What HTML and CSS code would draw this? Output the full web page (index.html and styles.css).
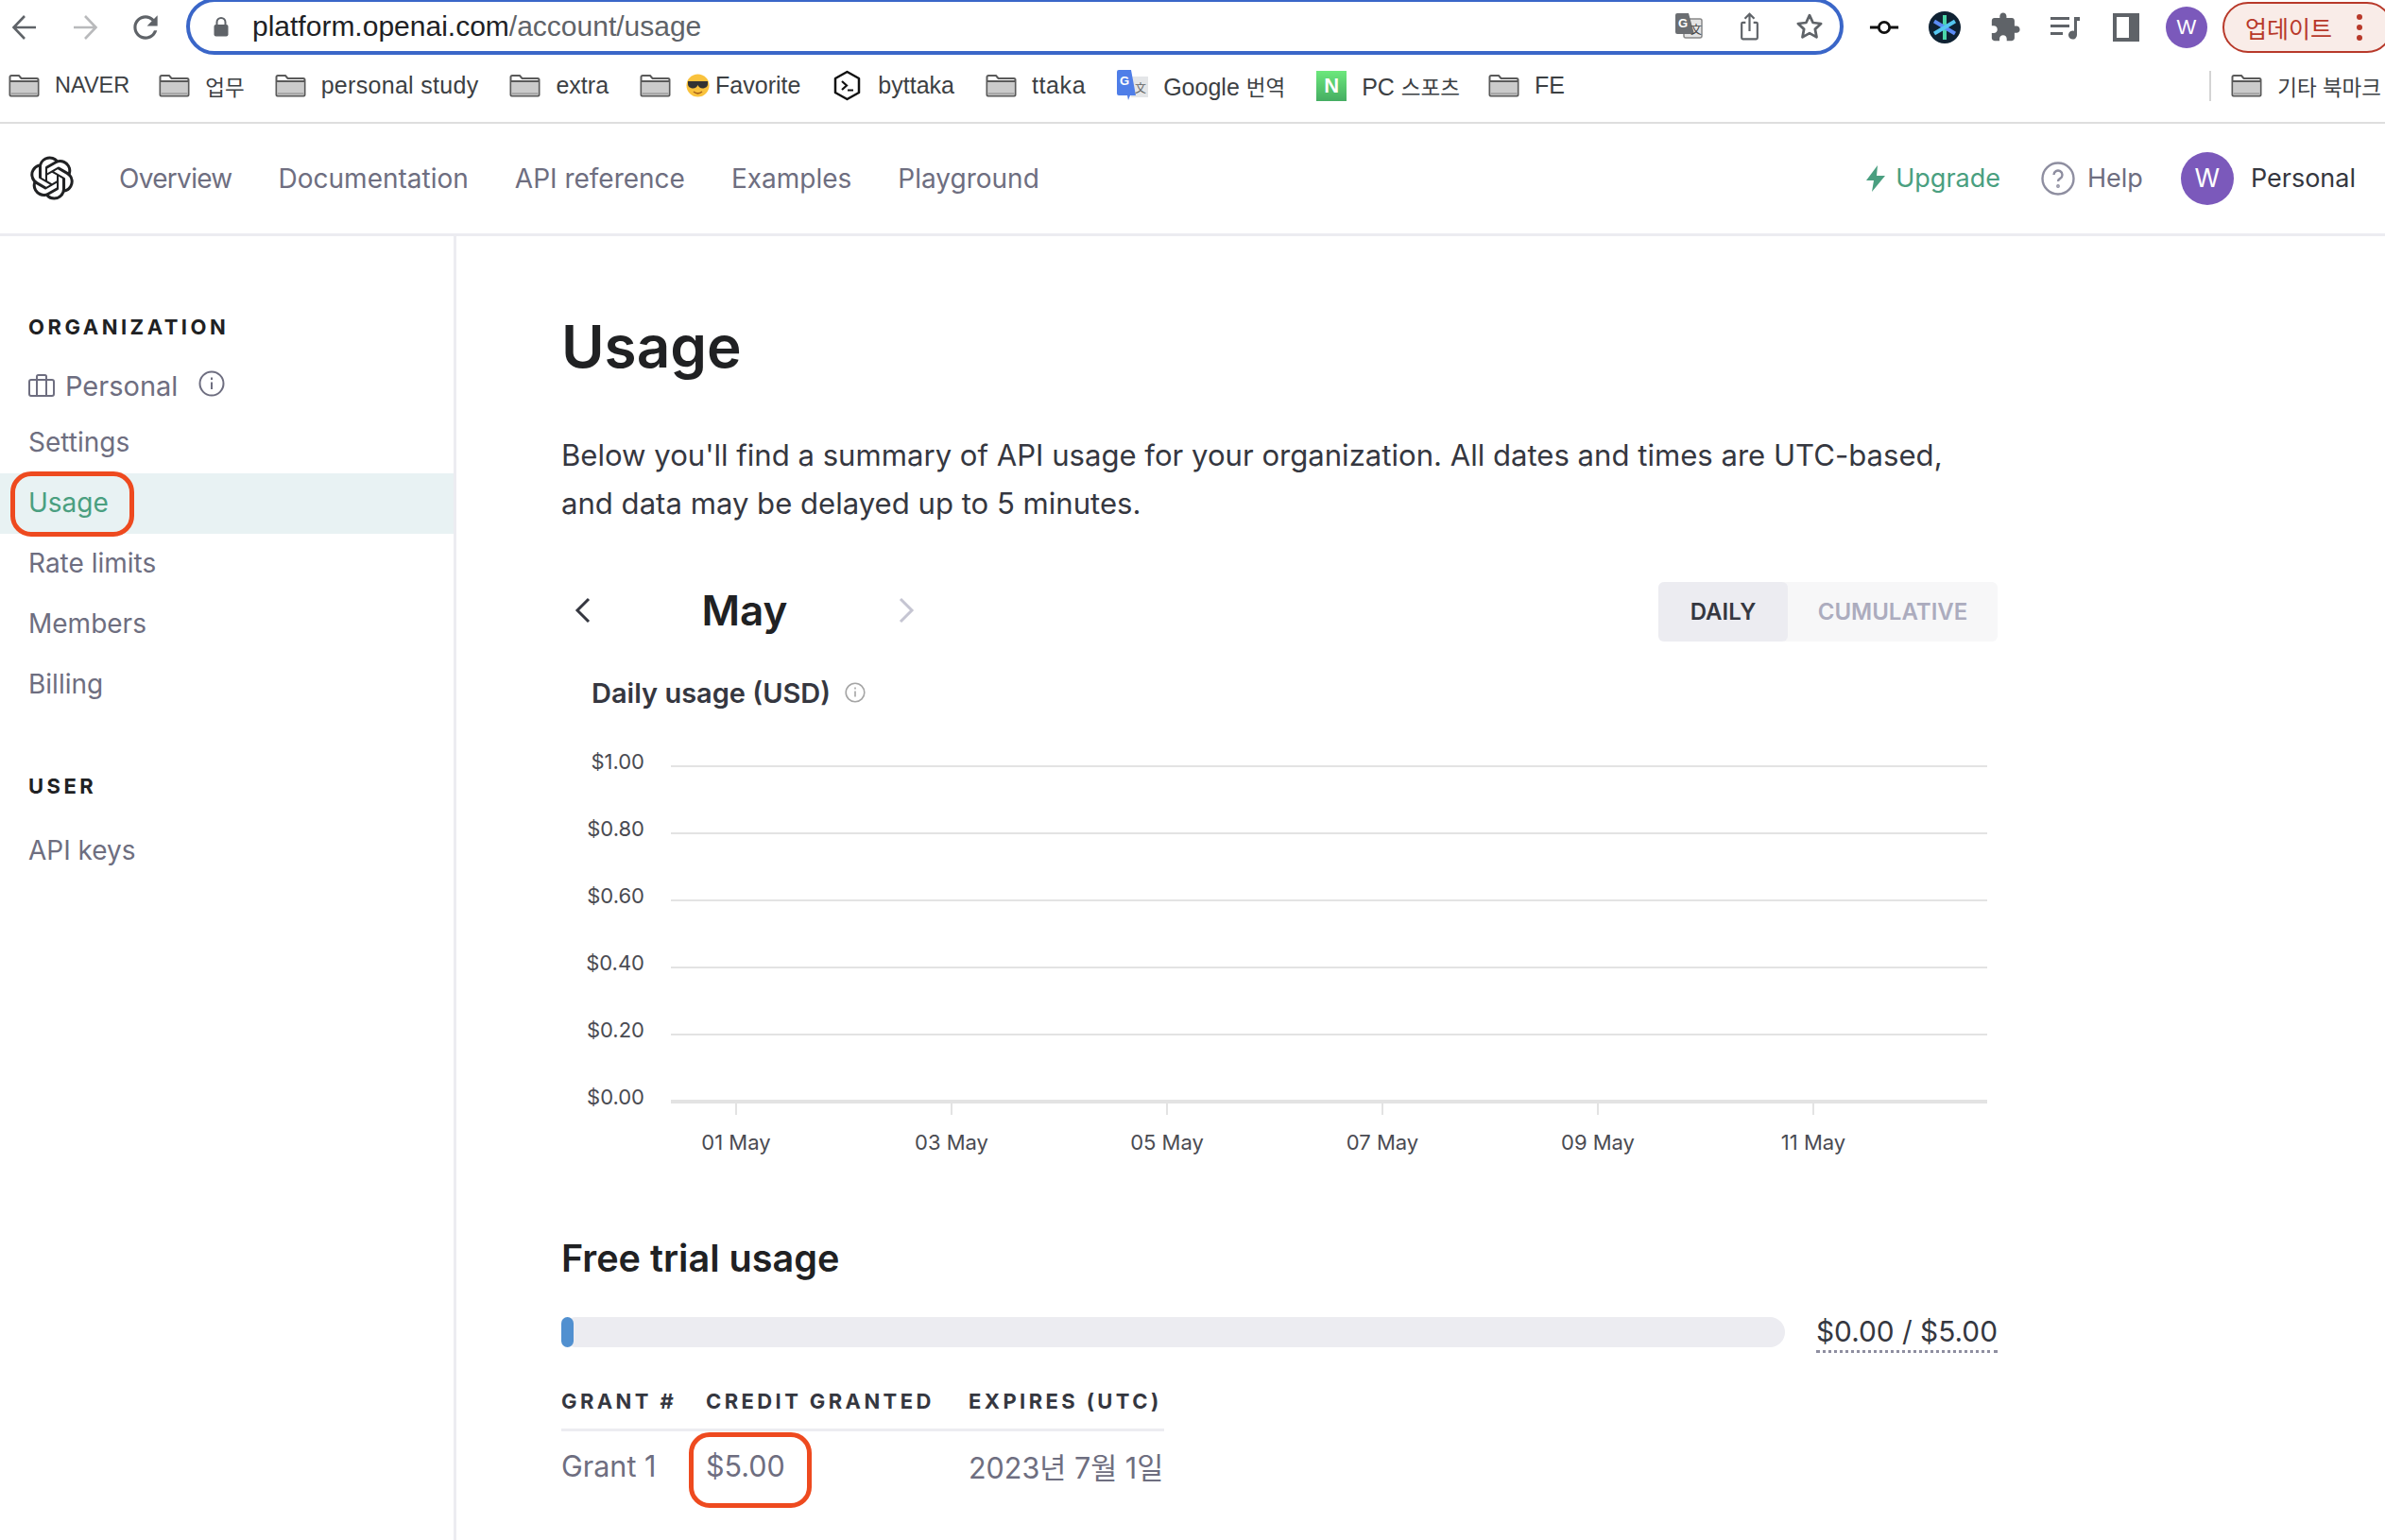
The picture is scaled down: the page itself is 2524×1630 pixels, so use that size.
FILE: index.html
```html
<!DOCTYPE html>
<html lang="ko">
  <head>
    <meta charset="UTF-8" />
    <meta name="viewport" content="width=device-width, initial-scale=1.0" />
    <title>Usage - OpenAI API</title>
    <link rel="stylesheet" href="styles.css">
  </head>
  <body>
    <svg class="defs" width="0" height="0">
      <symbol id="folder" viewBox="0 0 33 24">
        <path d="M1.5 4.5V3a1.5 1.5 0 0 1 1.5-1.5h8l2.5 3H30A1.5 1.5 0 0 1 31.5 6v16a1 1 0 0 1-1 1h-28a1 1 0 0 1-1-1z" fill="#fff" stroke="#5a5a5a" stroke-width="2"/>
        <rect x="2.5" y="8.5" width="28" height="13.5" fill="#cbcbcb"/>
        <path d="M1.5 7.5h30" stroke="#5a5a5a" stroke-width="2"/>
        <path d="M2.5 20.5h28" stroke="#a8a8a8" stroke-width="2"/>
      </symbol>
    </svg>

    <div class="toolbar">
      <div class="slot"><svg width="28" height="28" viewBox="0 0 28 28" fill="none" stroke="#5f6368" stroke-width="2.6"><path d="M26 14H3M14 2 2.5 14 14 26"/></svg></div>
      <div class="slot"><svg width="28" height="28" viewBox="0 0 28 28" fill="none" stroke="#b9babc" stroke-width="2.6"><path d="M2 14h23M14 2l11.5 12L14 26"/></svg></div>
      <div class="slot"><svg width="38" height="38" viewBox="0 0 24 24" fill="#5f6368"><path d="M17.65 6.35C16.2 4.9 14.21 4 12 4c-4.42 0-7.99 3.58-7.99 8s3.57 8 7.99 8c3.73 0 6.84-2.55 7.73-6h-2.08c-.82 2.33-3.04 4-5.65 4-3.31 0-6-2.69-6-6s2.69-6 6-6c1.66 0 3.14.69 4.22 1.78L13 11h7V4l-2.35 2.35z"/></svg></div>
      <div class="url-bar">
        <svg class="lock" width="16" height="21" viewBox="0 0 16 21"><path d="M3.5 8V5.5a4.5 4.5 0 0 1 9 0V8" fill="none" stroke="#5f6368" stroke-width="2"/><rect x="0.5" y="8" width="15" height="12.5" rx="2" fill="#5f6368"/></svg>
        <div class="url-text">platform.openai.com<span>/account/usage</span></div>
        <div class="slot">
          <svg width="30" height="30" viewBox="0 0 30 30"><rect x="10" y="7" width="19" height="20" rx="2" fill="#e4e4e4" stroke="#888" stroke-width="1.5"/><path d="M1 3a2 2 0 0 1 2-2h12l6 22H3a2 2 0 0 1-2-2z" fill="#6b6e72"/><text x="4" y="16" class="mini-g" fill="#fff">G</text><text x="17" y="23" class="mini-wen" fill="#444">文</text></svg>
        </div>
        <div class="slot">
          <svg width="21" height="30" viewBox="0 0 24 36" fill="none" stroke="#5f6368" stroke-width="2.6"><path d="M7 13H3.5A1.5 1.5 0 0 0 2 14.5v18A1.5 1.5 0 0 0 3.5 34h17a1.5 1.5 0 0 0 1.5-1.5v-18a1.5 1.5 0 0 0-1.5-1.5H17M12 24V2M6 8l6-6 6 6"/></svg>
        </div>
        <div class="slot">
          <svg width="30" height="30" viewBox="0 0 24 24" fill="none" stroke="#5f6368" stroke-width="2.2" stroke-linejoin="round"><path d="m12 2.5 2.9 6.3 6.8.8-5 4.7 1.3 6.8-6-3.4-6 3.4 1.3-6.8-5-4.7 6.8-.8z"/></svg>
        </div>
      </div>
      <div class="slot">
        <svg width="32" height="20" viewBox="0 0 34 20" fill="none" stroke="#111" stroke-width="3"><path d="M1 10h10M23 10h10"/><circle cx="17" cy="10" r="6"/></svg>
      </div>
      <div class="slot">
        <svg width="34" height="34" viewBox="0 0 34 34"><circle cx="17" cy="17" r="17" fill="#0f2233"/><g stroke-width="4"><path d="M17 4v26" stroke="#4bd6a8"/><path d="M6 10.5l22 13" stroke="#5b8cf5"/><path d="M28 10.5l-22 13" stroke="#54c6f0"/></g></svg>
      </div>
      <div class="slot">
        <svg width="34" height="34" viewBox="0 0 24 24" fill="#5f6368"><path d="M20.5 11H19V7c0-1.1-.9-2-2-2h-4V3.5C13 2.12 11.88 1 10.5 1S8 2.12 8 3.5V5H4c-1.1 0-1.99.9-1.99 2v3.8H3.5c1.49 0 2.7 1.21 2.7 2.7s-1.21 2.7-2.7 2.7H2V20c0 1.1.9 2 2 2h3.8v-1.5c0-1.49 1.21-2.7 2.7-2.7 1.49 0 2.7 1.21 2.7 2.7V22H17c1.1 0 2-.9 2-2v-4h1.5c1.38 0 2.5-1.12 2.5-2.5S21.88 11 20.5 11z"/></svg>
      </div>
      <div class="slot">
        <svg width="32" height="26" viewBox="0 0 32 26" fill="#5f6368"><rect x="0" y="2" width="20" height="3"/><rect x="0" y="10" width="20" height="3"/><rect x="0" y="18" width="13" height="3"/><path d="M25 2h6v4h-3v15a4.5 4.5 0 1 1-3-4.2z"/></svg>
      </div>
      <div class="slot">
        <svg width="28" height="30" viewBox="0 0 28 30"><rect width="28" height="30" fill="#5f6368"/><rect x="4" y="4" width="13" height="22" fill="#fff"/></svg>
      </div>
      <div class="slot"><div class="chrome-avatar">W</div></div>
      <div class="update-btn">
        <span>업데이트</span>
        <i class="kebab"></i>
      </div>
    </div>

    <div class="bookmarks">
      <div class="bm bm-naver"><svg class="bm-icon"><use href="#folder"/></svg>NAVER</div>
      <div class="bm bm-work"><svg class="bm-icon"><use href="#folder"/></svg><span class="ko">업무</span></div>
      <div class="bm bm-study"><svg class="bm-icon"><use href="#folder"/></svg>personal study</div>
      <div class="bm"><svg class="bm-icon"><use href="#folder"/></svg>extra</div>
      <div class="bm">
        <svg class="bm-icon"><use href="#folder"/></svg>
        <span class="bm-emoji">
          <svg width="25" height="25" viewBox="0 0 25 25"><circle cx="12.5" cy="12.5" r="12" fill="#f9c23c"/><path d="M2 8h21v3c0 3-3 4.5-5.5 4.5-2.5 0-4-1.5-5-3.5-1 2-2.5 3.5-5 3.5C5 15.5 2 14 2 11z" fill="#333"/><path d="M8 19c3 2.5 6 2.5 9 0" fill="none" stroke="#a5601c" stroke-width="1.5"/></svg>
          Favorite
        </span>
      </div>
      <div class="bm">
        <svg class="bm-icon" viewBox="0 0 33 33"><path d="M16.5 2 29 9v15l-12.5 7L4 24V9z" fill="#fff" stroke="#111" stroke-width="2.5" stroke-linejoin="round"/><path d="m11 12 5 4.5-5 4.5M17 21.5h6" fill="none" stroke="#111" stroke-width="2.2"/></svg>
        byttaka
      </div>
      <div class="bm bm-ttaka"><svg class="bm-icon"><use href="#folder"/></svg>ttaka</div>
      <div class="bm">
        <svg class="bm-icon" viewBox="0 0 33 33"><rect x="15" y="7" width="18" height="22" fill="#e4e6e8"/><path d="M2 0h13l5 27H14l-2 5-1-5H2a2 2 0 0 1-2-2V2a2 2 0 0 1 2-2z" fill="#4f7ee8"/><text x="3" y="16" class="mini-g" fill="#fff">G</text><text x="19" y="24" class="mini-wen" fill="#666">文</text></svg>
        <span>Google <span class="ko">번역</span></span>
      </div>
      <div class="bm bm-pc"><div class="naver-n">N</div><span>PC <span class="ko">스포츠</span></span></div>
      <div class="bm"><svg class="bm-icon"><use href="#folder"/></svg>FE</div>
      <div class="bm bm-other"><svg class="bm-icon"><use href="#folder"/></svg><span class="ko">기타 북마크</span></div>
    </div>

    <header class="topnav">
      <svg class="logo" width="46" height="47" viewBox="0 0 24 24" fill="#202123"><path d="M22.2819 9.8211a5.9847 5.9847 0 0 0-.5157-4.9108 6.0462 6.0462 0 0 0-6.5098-2.9A6.0651 6.0651 0 0 0 4.9807 4.1818a5.9847 5.9847 0 0 0-3.9977 2.9 6.0462 6.0462 0 0 0 .7427 7.0966 5.98 5.98 0 0 0 .511 4.9107 6.051 6.051 0 0 0 6.5146 2.9001A5.9847 5.9847 0 0 0 13.2599 24a6.0557 6.0557 0 0 0 5.7718-4.2058 5.9894 5.9894 0 0 0 3.9977-2.9001 6.0557 6.0557 0 0 0-.7475-7.0729zm-9.022 12.6081a4.4755 4.4755 0 0 1-2.8764-1.0408l.1419-.0804 4.7783-2.7582a.7948.7948 0 0 0 .3927-.6813v-6.7369l2.02 1.1686a.071.071 0 0 1 .038.052v5.5826a4.504 4.504 0 0 1-4.4945 4.4944zm-9.6607-4.1254a4.4708 4.4708 0 0 1-.5346-3.0137l.142.0852 4.783 2.7582a.7712.7712 0 0 0 .7806 0l5.8428-3.3685v2.3324a.0804.0804 0 0 1-.0332.0615L9.74 19.9502a4.4992 4.4992 0 0 1-6.1408-1.6464zM2.3408 7.8956a4.485 4.485 0 0 1 2.3655-1.9728V11.6a.7664.7664 0 0 0 .3879.6765l5.8144 3.3543-2.0201 1.1685a.0757.0757 0 0 1-.071 0l-4.8303-2.7865A4.504 4.504 0 0 1 2.3408 7.872zm16.5963 3.8558L13.1038 8.364 15.1192 7.2a.0757.0757 0 0 1 .071 0l4.8303 2.7913a4.4944 4.4944 0 0 1-.6765 8.1042v-5.6772a.79.79 0 0 0-.407-.667zm2.0107-3.0231l-.142-.0852-4.7735-2.7818a.7759.7759 0 0 0-.7854 0L9.409 9.2297V6.8974a.0662.0662 0 0 1 .0284-.0615l4.8303-2.7866a4.4992 4.4992 0 0 1 6.6802 4.66zM8.3065 12.863l-2.02-1.1638a.0804.0804 0 0 1-.038-.0567V6.0742a4.4992 4.4992 0 0 1 7.3757-3.4537l-.142.0805L8.704 5.459a.7948.7948 0 0 0-.3927.6813zm1.0976-2.3654l2.602-1.4998 2.6069 1.4998v2.9994l-2.5974 1.4997-2.6067-1.4997Z"/></svg>
      <nav class="nav-links">
        <a class="nav-overview">Overview</a>
        <a>Documentation</a>
        <a>API reference</a>
        <a>Examples</a>
        <a>Playground</a>
      </nav>
      <div class="nav-right">
        <a class="upgrade">
          <svg width="20" height="28" viewBox="0 0 20 28" fill="#4a9f80"><path d="M12 0 0 16h8l-2 12 14-17h-9z"/></svg>
          Upgrade
        </a>
        <a class="help">
          <svg width="36" height="36" viewBox="0 0 36 36" fill="none" stroke="#8e8ea0" stroke-width="2.4"><circle cx="18" cy="18" r="16.5"/><path d="M13.5 14a4.5 4.5 0 1 1 6.8 3.9c-1.4.8-2.3 1.6-2.3 3.1"/><circle cx="18" cy="26" r="0.7"/></svg>
          Help
        </a>
        <a class="account">
          <div class="account-avatar">W</div>
          Personal
        </a>
      </div>
    </header>

    <div class="layout">
      <aside class="sidebar">
        <h5 class="side-title">ORGANIZATION</h5>
        <div class="side-org">
          <svg width="28" height="24" viewBox="0 0 28 24" fill="none" stroke="#6e6e80" stroke-width="2"><rect x="1" y="6" width="26" height="17" rx="2"/><path d="M9 23V2.5A1.5 1.5 0 0 1 10.5 1h7A1.5 1.5 0 0 1 19 2.5V23"/></svg>
          <span>Personal</span>
          <svg class="org-info" width="28" height="28" viewBox="0 0 28 28" fill="none" stroke="#6e6e80" stroke-width="2"><circle cx="14" cy="14" r="12.5"/><path d="M14 12.5v7.5M14 7.5v2.5"/></svg>
        </div>
        <a class="side-link side-settings">Settings</a>
        <a class="side-link active">Usage<span class="ring ring-usage"></span></a>
        <a class="side-link">Rate limits</a>
        <a class="side-link">Members</a>
        <a class="side-link">Billing</a>
        <h5 class="side-title side-user">USER</h5>
        <a class="side-link">API keys</a>
      </aside>

      <main class="content">
        <h1 class="page-title">Usage</h1>
        <p class="intro">Below you'll find a summary of API usage for your organization. All dates and times are UTC-based, and data may be delayed up to 5 minutes.</p>

        <div class="month-row">
          <svg class="chev" width="18" height="28" viewBox="0 0 18 28" fill="none" stroke="#353740" stroke-width="3"><path d="M15 2 3 14l12 12"/></svg>
          <h2 class="month">May</h2>
          <svg width="18" height="28" viewBox="0 0 18 28" fill="none" stroke="#c5c5d2" stroke-width="3"><path d="m3 2 12 12L3 26"/></svg>
          <div class="toggle">
            <div class="toggle-on">DAILY</div>
            <div class="toggle-off">CUMULATIVE</div>
          </div>
        </div>

        <div class="chart-title">
          Daily usage (USD)
          <svg width="22" height="22" viewBox="0 0 22 22" fill="none" stroke="#a5a5a5" stroke-width="1.6"><circle cx="11" cy="11" r="9.8"/><path d="M11 9.5v6M11 5.5v2"/></svg>
        </div>

        <svg class="chart" width="1520" height="440" viewBox="0 0 1520 440">
          <g class="grid-lines">
            <line x1="116" x2="1509" y1="20" y2="20"/>
            <line x1="116" x2="1509" y1="91" y2="91"/>
            <line x1="116" x2="1509" y1="162" y2="162"/>
            <line x1="116" x2="1509" y1="233" y2="233"/>
            <line x1="116" x2="1509" y1="304" y2="304"/>
            <line class="axis" x1="116" x2="1509" y1="375" y2="375"/>
            <line x1="185" x2="185" y1="377" y2="389"/>
            <line x1="413" x2="413" y1="377" y2="389"/>
            <line x1="641" x2="641" y1="377" y2="389"/>
            <line x1="869" x2="869" y1="377" y2="389"/>
            <line x1="1097" x2="1097" y1="377" y2="389"/>
            <line x1="1325" x2="1325" y1="377" y2="389"/>
          </g>
          <g class="y-labels">
            <text x="88" y="23">$1.00</text>
            <text x="88" y="94">$0.80</text>
            <text x="88" y="165">$0.60</text>
            <text x="88" y="236">$0.40</text>
            <text x="88" y="307">$0.20</text>
            <text x="88" y="378">$0.00</text>
          </g>
          <g class="x-labels">
            <text x="185" y="426">01 May</text>
            <text x="413" y="426">03 May</text>
            <text x="641" y="426">05 May</text>
            <text x="869" y="426">07 May</text>
            <text x="1097" y="426">09 May</text>
            <text x="1325" y="426">11 May</text>
          </g>
        </svg>

        <h3 class="section-title">Free trial usage</h3>
        <div class="progress-row">
          <div class="progress"><div class="progress-fill" style="width: 1%"></div></div>
          <div class="progress-amount">$0.00 / $5.00</div>
        </div>

        <table class="grants">
          <thead>
            <tr>
              <th class="col-grant">GRANT #</th>
              <th class="col-credit">CREDIT GRANTED</th>
              <th>EXPIRES (UTC)</th>
            </tr>
          </thead>
          <tbody>
            <tr>
              <td>Grant 1</td>
              <td class="credit-cell">$5.00<span class="ring ring-credit"></span></td>
              <td>2023년 7월 1일</td>
            </tr>
          </tbody>
        </table>
      </main>
    </div>
  </body>
</html>
```

FILE: styles.css
```css
* {
  margin: 0;
  padding: 0;
  box-sizing: border-box;
}
body {
  width: 2524px;
  height: 1630px;
  overflow: hidden;
  background: #fff;
  font-family: Inter, "Noto Sans CJK KR", sans-serif;
}
.defs {
  position: absolute;
}

/* browser chrome */
.toolbar {
  display: flex;
  align-items: center;
  height: 58px;
  margin-left: -6px;
  width: 2530px;
}
.slot {
  flex: none;
  width: 64px;
  height: 56px;
  display: flex;
  align-items: center;
  justify-content: center;
}
.url-bar {
  flex: none;
  width: 1754px;
  height: 60px;
  margin: -2px 11px 0 11px;
  padding-left: 25px;
  display: flex;
  align-items: center;
  border: 4px solid #3a66c8;
  border-radius: 30px;
}
.lock {
  flex: none;
  margin-right: 25px;
}
.url-text {
  flex: 1;
  font-family: "Liberation Sans", sans-serif;
  font-size: 30px;
  color: #202124;
}
.url-text span {
  color: #5f6368;
}
.mini-g {
  font: bold 13px "Liberation Sans", sans-serif;
}
.mini-wen {
  font: 12px "Noto Sans CJK SC", sans-serif;
}
.chrome-avatar {
  width: 44px;
  height: 44px;
  border-radius: 50%;
  background: #7b59bb;
  color: #fff;
  font: 22px "Liberation Sans", sans-serif;
  display: flex;
  align-items: center;
  justify-content: center;
}
.update-btn {
  flex: none;
  width: 180px;
  height: 54px;
  margin-left: 6px;
  padding-left: 22px;
  display: flex;
  align-items: center;
  gap: 26px;
  background: #f9ece8;
  border: 2px solid #b8392a;
  border-radius: 27px;
  color: #b8392a;
  font: 25px "Noto Sans CJK KR", sans-serif;
}
.kebab {
  width: 6px;
  height: 6px;
  border-radius: 50%;
  background: #b8392a;
  box-shadow: 0 -11px 0 #b8392a, 0 11px 0 #b8392a;
}

.bookmarks {
  height: 73px;
  padding: 0 4px 6px 9px;
  display: flex;
  align-items: center;
  gap: 33px;
  border-bottom: 2px solid #dedede;
  font-family: "Liberation Sans", "Noto Sans CJK KR", sans-serif;
  font-size: 25px;
  color: #3c4043;
  white-space: nowrap;
}
.bm {
  display: flex;
  align-items: center;
  gap: 16px;
}
.bm-naver {
  font-size: 23.5px;
  margin-right: -2px;
}
.bm-work {
  margin-right: -1px;
}
.bm-study {
  letter-spacing: 0.3px;
}
.bm-ttaka {
  letter-spacing: 0.6px;
}
.bm-pc {
  margin-right: -3px;
}
.ko {
  font-size: 22.5px;
}
.bm-icon {
  flex: none;
  width: 33px;
  height: 33px;
}
.bm-emoji {
  display: flex;
  align-items: center;
  gap: 6px;
}
.naver-n {
  width: 32px;
  height: 32px;
  background: linear-gradient(#6ce87c, #45ad62);
  color: #fff;
  font-weight: bold;
  font-size: 22px;
  display: flex;
  align-items: center;
  justify-content: center;
}
.bm-other {
  margin-left: auto;
  padding-left: 21px;
  border-left: 2px solid #d4d4d4;
  height: 32px;
}

/* site header */
.topnav {
  height: 119px;
  padding: 0 31px 1px 32px;
  display: flex;
  align-items: center;
  border-bottom: 3px solid #ececf1;
}
.logo {
  flex: none;
}
.nav-links {
  display: flex;
  gap: 49px;
  margin-left: 48px;
  font-size: 28px;
  color: #6e6e80;
}
.nav-overview {
  letter-spacing: -0.7px;
}
.nav-right {
  margin-left: auto;
  display: flex;
  align-items: center;
  font-size: 27px;
}
.upgrade {
  display: flex;
  align-items: center;
  gap: 11px;
  color: #4a9f80;
}
.help {
  display: flex;
  align-items: center;
  gap: 13px;
  margin-left: 43px;
  color: #6e6e80;
}
.account {
  display: flex;
  align-items: center;
  gap: 18px;
  margin-left: 40px;
  color: #353740;
}
.account-avatar {
  width: 56px;
  height: 56px;
  border-radius: 50%;
  background: #7b59bb;
  color: #fff;
  font-size: 27px;
  display: flex;
  align-items: center;
  justify-content: center;
}

/* page */
.layout {
  display: flex;
  height: 1380px;
}
.sidebar {
  flex: none;
  width: 483px;
  padding-top: 81px;
  border-right: 3px solid #ececf1;
}
.side-title {
  padding-left: 30px;
  font-size: 22px;
  line-height: 30px;
  font-weight: 700;
  letter-spacing: 3.5px;
  color: #202123;
}
.side-user {
  margin-top: 60px;
  margin-bottom: 22px;
}
.side-org {
  display: flex;
  align-items: center;
  height: 64px;
  margin-top: 15px;
  padding-left: 30px;
  font-size: 29px;
  color: #6e6e80;
}
.side-org span {
  margin-left: 11px;
}
.org-info {
  margin-left: 22px;
  margin-top: -4px;
}
.side-link {
  position: relative;
  display: flex;
  align-items: center;
  height: 64px;
  padding: 0 0 2px 30px;
  font-size: 28px;
  color: #6e6e80;
}
.side-settings {
  height: 61px;
  padding-bottom: 6px;
}
.active {
  background: #e8f2f3;
  color: #4a9f80;
}
.ring {
  position: absolute;
  border: 5px solid #ee4a1f;
  border-radius: 22px;
}
.ring-usage {
  left: 11px;
  top: -2px;
  width: 131px;
  height: 69px;
}

.content {
  flex: 1;
  padding-left: 111px;
  width: 1520px;
}
.page-title {
  margin-top: 77px;
  font-size: 62px;
  line-height: 80px;
  font-weight: 600;
  color: #202123;
}
.intro {
  margin-top: 50px;
  width: 1480px;
  font-size: 31.1px;
  line-height: 51px;
  color: #353740;
}
.month-row {
  display: flex;
  align-items: center;
  width: 1520px;
  height: 67px;
  margin-top: 53px;
}
.chev {
  flex: none;
  margin-left: 14px;
}
.month {
  width: 324px;
  text-align: center;
  font-size: 44px;
  font-weight: 600;
  color: #202123;
}
.toggle {
  margin-left: auto;
  margin-top: 4px;
  display: flex;
  width: 359px;
  height: 63px;
  background: #f7f7f8;
  border-radius: 6px;
  font-size: 24px;
  font-weight: 600;
}
.toggle-on {
  width: 137px;
  background: #ececf1;
  border-radius: 6px;
  color: #353740;
  display: flex;
  align-items: center;
  justify-content: center;
}
.toggle-off {
  flex: 1;
  color: #acacbe;
  display: flex;
  align-items: center;
  justify-content: center;
}
.chart-title {
  display: flex;
  align-items: center;
  gap: 15px;
  margin: 32px 0 0 32px;
  height: 44px;
  font-size: 29px;
  font-weight: 600;
  color: #353740;
}
.chart {
  display: block;
  margin-top: 36px;
}
.grid-lines line {
  stroke: #e3e3e3;
  stroke-width: 2;
}
.grid-lines .axis {
  stroke-width: 4;
}
.y-labels text {
  text-anchor: end;
  font-size: 22px;
  fill: #4a4b52;
}
.x-labels text {
  text-anchor: middle;
  font-size: 22px;
  fill: #4a4b52;
}
.section-title {
  margin-top: 75px;
  font-size: 39.6px;
  line-height: 52px;
  font-weight: 600;
  color: #202123;
}
.progress-row {
  display: flex;
  align-items: center;
  width: 1520px;
  height: 44px;
  margin-top: 30px;
}
.progress {
  flex: none;
  width: 1295px;
  height: 32px;
  background: #ececf1;
  border-radius: 16px;
}
.progress-fill {
  height: 100%;
  min-width: 13px;
  background: #5190d0;
  border-radius: 7px;
}
.progress-amount {
  margin-left: 33px;
  padding: 2px 0;
  border-bottom: 3px dotted #8e8ea0;
  font-size: 29.8px;
  color: #353740;
  white-space: nowrap;
}
.grants {
  margin-top: 32px;
  width: 638px;
  border-collapse: collapse;
  table-layout: fixed;
}
.grants th {
  height: 49px;
  padding: 0 0 9px;
  border-bottom: 3px solid #ececf1;
  text-align: left;
  font-size: 22px;
  font-weight: 700;
  letter-spacing: 3.4px;
  color: #353740;
  white-space: nowrap;
}
.col-grant {
  width: 153px;
}
.col-credit {
  width: 278px;
}
.grants td {
  height: 76px;
  font-size: 30.5px;
  color: #6e6e80;
  white-space: nowrap;
}
.credit-cell {
  position: relative;
}
.ring-credit {
  left: -18px;
  top: 1px;
  width: 130px;
  height: 80px;
}
```
